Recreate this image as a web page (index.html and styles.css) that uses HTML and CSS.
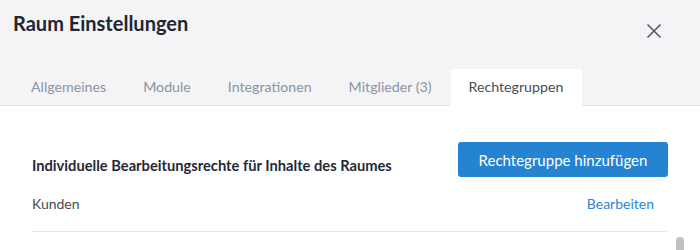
FILE: index.html
```html
<!DOCTYPE html>
<html lang="de">
<head>
    <meta charset="UTF-8">
    <meta name="viewport" content="width=device-width, initial-scale=1.0">
    <title>Raum Einstellungen</title>
    <link rel="stylesheet" href="styles.css">
</head>
<body>
    <div class="modal">
        <div class="modal-header">
            <div class="title-row">
                <h1 class="modal-title">Raum Einstellungen</h1>
                <button class="close-button" aria-label="Schließen">
                    <svg width="16" height="16" viewBox="0 0 16 16">
                        <path d="M1.5 1.5 L14.5 14.5 M14.5 1.5 L1.5 14.5" stroke="#555a60" stroke-width="1.6" fill="none"/>
                    </svg>
                </button>
            </div>
            <div class="tabs">
                <div class="tab">Allgemeines</div>
                <div class="tab">Module</div>
                <div class="tab">Integrationen</div>
                <div class="tab">Mitglieder (3)</div>
                <div class="tab active">Rechtegruppen</div>
            </div>
        </div>
        <div class="modal-body">
            <div class="section-head">
                <h2 class="section-title">Individuelle Bearbeitungsrechte für Inhalte des Raumes</h2>
                <button class="primary-button">Rechtegruppe hinzufügen</button>
            </div>
            <div class="group-row">
                <span class="group-name">Kunden</span>
                <a class="edit-link" href="#">Bearbeiten</a>
            </div>
        </div>
        <div class="scroll-thumb"></div>
    </div>
</body>
</html>
```

FILE: styles.css
```css
body {
    margin: 0;
    font-family: Lato, "Open Sans", sans-serif;
    background-color: #ffffff;
}

.modal {
    position: relative;
    width: 700px;
    height: 250px;
    overflow: hidden;
    background-color: #ffffff;
}

.modal-header {
    background-color: #f4f4f6;
    border-bottom: 1px solid #e4e5ea;
}

.title-row {
    display: flex;
    justify-content: space-between;
    align-items: flex-start;
    height: 69px;
    padding: 0 38px 0 13px;
}

.modal-title {
    margin: 0;
    margin-top: 11px;
    font-size: 20px;
    line-height: 24px;
    font-weight: 700;
    color: #1d2733;
}

.close-button {
    margin-top: 23px;
    padding: 0;
    border: none;
    background: none;
    cursor: pointer;
    width: 16px;
    height: 16px;
}

.tabs {
    display: flex;
    padding-left: 13px;
}

.tab {
    height: 36px;
    line-height: 36px;
    padding: 0 19px 0 18px;
    font-size: 14.2px;
    color: #8a93a1;
    cursor: pointer;
}

.tab.active {
    background-color: #ffffff;
    color: #4b4d51;
    border-radius: 3px 3px 0 0;
    margin-bottom: -1px;
    height: 37px;
}

.modal-body {
    padding: 36px 32px 0 32px;
}

.section-head {
    display: flex;
    justify-content: space-between;
    align-items: flex-start;
}

.section-title {
    margin: 0;
    margin-top: 14px;
    font-size: 14.7px;
    line-height: 18px;
    font-weight: 700;
    color: #1f2a36;
}

.primary-button {
    height: 35px;
    width: 210px;
    border: none;
    border-radius: 3px;
    background-color: #2583d1;
    color: #ffffff;
    font-family: inherit;
    font-size: 15px;
    cursor: pointer;
}

.group-row {
    display: flex;
    justify-content: space-between;
    align-items: center;
    padding: 18px 14px 18px 0;
    line-height: 18px;
    border-bottom: 1px solid #e6e7ee;
    border-radius: 0 0 3px 0;
    font-size: 14px;
}

.group-name {
    color: #4a4c50;
}

.edit-link {
    color: #2a86d3;
    text-decoration: none;
}

.scroll-thumb {
    position: absolute;
    right: 16px;
    top: 237px;
    width: 8px;
    height: 30px;
    border-radius: 4px;
    background-color: #c1c1c1;
}
```
